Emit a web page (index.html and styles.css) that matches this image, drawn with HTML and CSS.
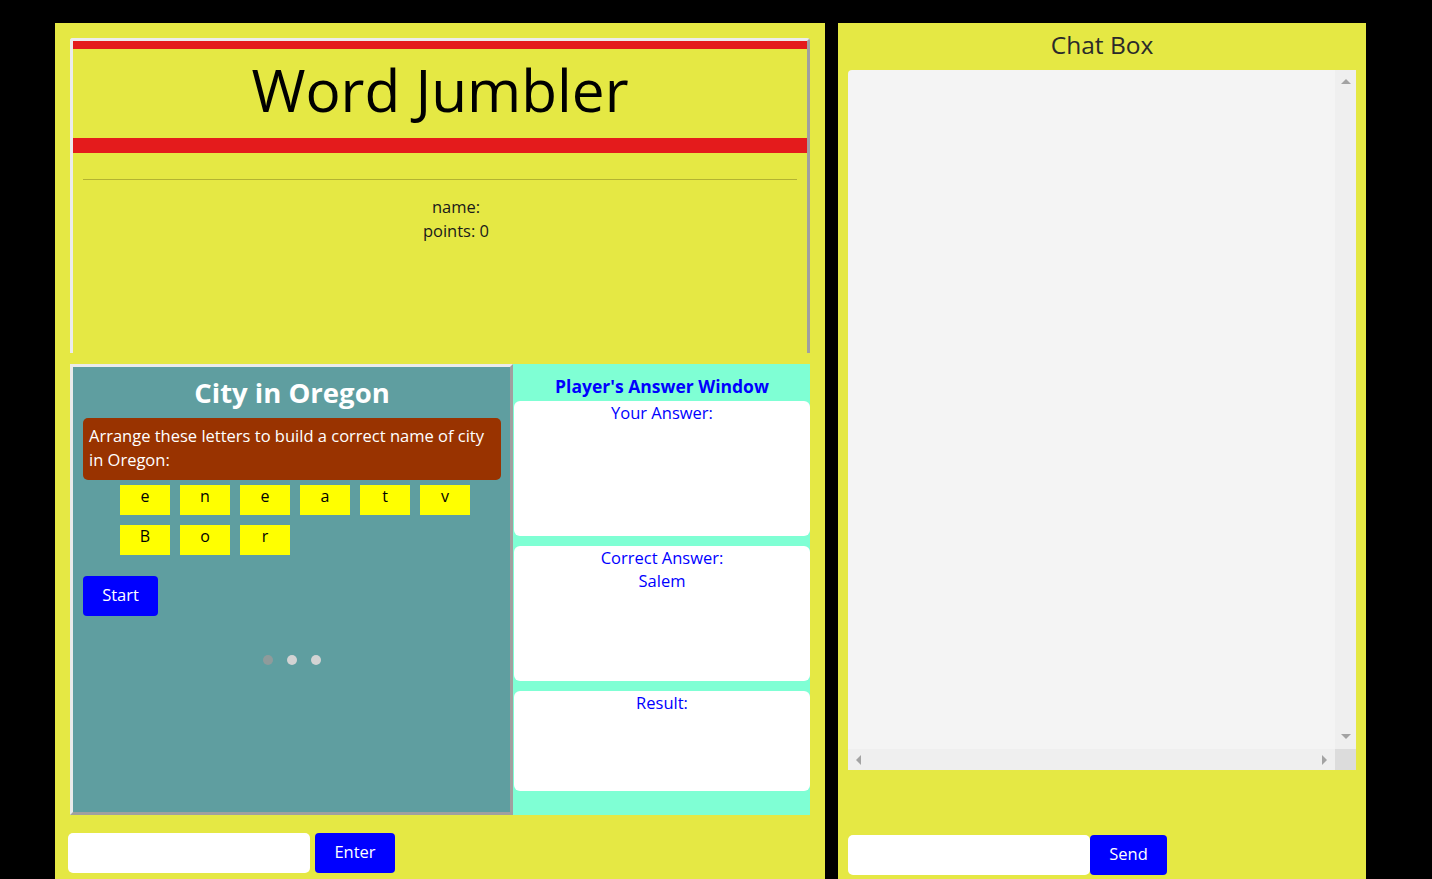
FILE: index.html
```html
<!DOCTYPE html>
<html lang="en">
<head>
<meta charset="utf-8">
<title>Word Jumbler</title>
<link rel="stylesheet" href="styles.css">
</head>
<body>
<div class="page">
  <section class="game-panel">
    <header class="banner">
      <h1 class="banner-title">Word Jumbler</h1>
      <hr class="banner-rule">
      <div class="player-info">
        <div>name:</div>
        <div>points: 0</div>
      </div>
    </header>

    <div class="play-area">
      <div class="puzzle">
        <h2 class="puzzle-title">City in Oregon</h2>
        <p class="puzzle-hint">Arrange these letters to build a correct name of city in Oregon:</p>
        <div class="tiles">
          <span class="tile">e</span>
          <span class="tile">n</span>
          <span class="tile">e</span>
          <span class="tile">a</span>
          <span class="tile">t</span>
          <span class="tile">v</span>
          <span class="tile">B</span>
          <span class="tile">o</span>
          <span class="tile">r</span>
        </div>
        <button class="btn start-btn" type="button">Start</button>
        <div class="dots">
          <span class="dot dot-active"></span>
          <span class="dot"></span>
          <span class="dot"></span>
        </div>
      </div>

      <div class="answers">
        <h3 class="answers-title">Player's Answer Window</h3>
        <div class="answer-box answer-box-tall">Your Answer:</div>
        <div class="answer-box answer-box-tall">Correct Answer:<br>Salem</div>
        <div class="answer-box answer-box-short">Result:</div>
      </div>
    </div>

    <form class="entry game-entry">
      <input class="text-input" type="text">
      <button class="btn entry-btn" type="button">Enter</button>
    </form>
  </section>

  <aside class="chat-panel">
    <h2 class="chat-title">Chat Box</h2>
    <div class="chat-log">
      <div class="chat-body"></div>
      <div class="vbar">
        <span class="sb-btn sb-up"><span class="arrow arrow-up"></span></span>
        <span class="sb-btn sb-down"><span class="arrow arrow-down"></span></span>
      </div>
      <div class="hbar">
        <span class="sb-btn"><span class="arrow arrow-left"></span></span>
        <span class="sb-btn"><span class="arrow arrow-right"></span></span>
      </div>
      <div class="sb-corner"></div>
    </div>
    <form class="entry chat-entry">
      <input class="text-input" type="text">
      <button class="btn send-btn" type="button">Send</button>
    </form>
  </aside>
</div>
</body>
</html>
```

FILE: styles.css
```css
html, body {
  margin: 0;
  height: 100%;
  overflow: hidden;
  background: #000;
}

body {
  font-family: "Open Sans", "DejaVu Sans", sans-serif;
  font-size: 16.5px;
  color: #1a1a1a;
}

.page {
  display: flex;
  align-items: flex-start;
  gap: 13px;
  padding: 23px 0 0 55px;
}

/* ---------- left game panel ---------- */
.game-panel {
  width: 770px;
  height: 856px;
  box-sizing: border-box;
  padding: 15px 15px 0;
  background: #e5e844;
}

.banner {
  height: 315px;
  box-sizing: border-box;
  border-style: solid;
  border-width: 3px 3px 0 3px;
  border-color: #ececec #a0a0a0 transparent #ececec;
  border-radius: 3px 3px 0 0;
}

.banner-title {
  margin: 0;
  border-top: 8px solid #e41b1c;
  border-bottom: 15px solid #e41b1c;
  padding-bottom: 8px;
  line-height: 81px;
  font-size: 58.5px;
  font-weight: 400;
  text-align: center;
  color: #000;
}

.banner-rule {
  margin: 26px 10px 0;
  border: 0;
  height: 1px;
  background: #b3b331;
}

.player-info {
  margin-top: 15px;
  padding-left: 32px;
  line-height: 24px;
  text-align: center;
}

.play-area {
  display: flex;
  height: 451px;
  margin-top: 11px;
}

.puzzle {
  width: 443px;
  box-sizing: border-box;
  border: 3px solid;
  border-color: #ebebeb #a0a0a0 #a0a0a0 #ebebeb;
  background: #5f9ea0;
  padding: 0 9px 0 10px;
}

.puzzle-title {
  margin: 7px 0 6px;
  line-height: 38px;
  font-size: 27.5px;
  font-weight: 700;
  text-align: center;
  color: #fff;
}

.puzzle-hint {
  margin: 0;
  padding: 6px 14px 8px 6px;
  border-radius: 5px;
  background: #993300;
  color: #fff;
  line-height: 24px;
}

.tiles {
  display: grid;
  grid-template-columns: repeat(6, 50px);
  grid-auto-rows: 30px;
  gap: 10px;
  margin: 5px 0 0 37px;
}

.tile {
  background: #ffff00;
  color: #000;
  text-align: center;
  line-height: 23px;
  font-size: 16px;
}

.btn {
  border: 0;
  border-radius: 4px;
  background: #0000ff;
  color: #fff;
  font-family: inherit;
  font-size: 16.5px;
  height: 40px;
  padding: 0 0 3px;
  cursor: pointer;
}

.start-btn {
  display: block;
  width: 75px;
  margin-top: 21px;
}

.dots {
  display: flex;
  justify-content: center;
  gap: 14px;
  margin-top: 39px;
}

.dot {
  width: 10px;
  height: 10px;
  border-radius: 50%;
  background: #d3d3d3;
}

.dot-active {
  background: #8f9b9b;
}

.answers {
  flex: 1;
  background: #7fffd4;
  padding-left: 1px;
}

.answers-title {
  margin: 10px 0 3px;
  line-height: 24px;
  font-size: 17.5px;
  font-weight: 700;
  text-align: center;
  color: #0000ff;
}

.answer-box {
  margin-bottom: 10px;
  border-radius: 6px;
  background: #fff;
  color: #0000ff;
  text-align: center;
  line-height: 23px;
}

.answer-box-tall {
  height: 135px;
}

.answer-box-short {
  height: 100px;
}

.entry {
  display: flex;
}

.game-entry {
  gap: 5px;
  margin: 18px 0 0 -2px;
}

.text-input {
  width: 242px;
  height: 40px;
  box-sizing: border-box;
  border: 0;
  border-radius: 5px;
  background: #fff;
  padding: 0 8px;
  font-family: inherit;
  font-size: 16px;
}

.entry-btn {
  width: 80px;
}

/* ---------- right chat panel ---------- */
.chat-panel {
  width: 528px;
  height: 856px;
  box-sizing: border-box;
  padding: 0 10px;
  background: #e5e844;
}

.chat-title {
  margin: 0;
  height: 47px;
  line-height: 44px;
  font-size: 24.5px;
  font-weight: 400;
  text-align: center;
  color: #2a2a2a;
}

.chat-log {
  display: grid;
  grid-template-columns: 1fr 21px;
  grid-template-rows: 1fr 21px;
  height: 700px;
  border-radius: 4px 0 0 0;
  overflow: hidden;
  background: #f4f4f4;
}

.vbar {
  display: flex;
  flex-direction: column;
  justify-content: space-between;
  background: #efefef;
}

.hbar {
  display: flex;
  justify-content: space-between;
  background: #efefef;
}

.sb-corner {
  background: #dcdcdc;
}

.sb-btn {
  display: flex;
  align-items: center;
  justify-content: center;
  width: 21px;
  height: 21px;
}

.sb-up {
  margin-top: 1px;
}

.sb-down {
  margin-bottom: 2px;
}

.arrow {
  width: 0;
  height: 0;
}

.arrow-up {
  border-left: 5px solid transparent;
  border-right: 5px solid transparent;
  border-bottom: 5px solid #a3a3a3;
}

.arrow-down {
  border-left: 5px solid transparent;
  border-right: 5px solid transparent;
  border-top: 5px solid #a3a3a3;
}

.arrow-left {
  border-top: 5px solid transparent;
  border-bottom: 5px solid transparent;
  border-right: 5px solid #a3a3a3;
}

.arrow-right {
  border-top: 5px solid transparent;
  border-bottom: 5px solid transparent;
  border-left: 5px solid #a3a3a3;
}

.chat-entry {
  margin-top: 65px;
}

.send-btn {
  width: 77px;
}
```
